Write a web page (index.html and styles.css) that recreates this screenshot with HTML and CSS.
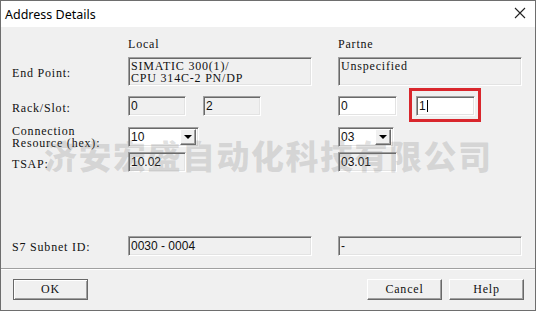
FILE: index.html
```html
<!DOCTYPE html>
<html>
<head>
<meta charset="utf-8">
<link rel="stylesheet" href="styles.css">
</head>
<body>
<div class="window">
  <div class="titlebar">
    <span class="title">Address Details</span>
    <svg class="close" width="12" height="12" viewBox="0 0 12 12"><path d="M1 1 L11 11 M11 1 L1 11" stroke="#222" stroke-width="1.1" fill="none"/></svg>
  </div>
  <div class="content">
    <div class="row r-head">
      <div class="label"></div>
      <div class="cell mono">Local</div>
      <div class="cell mono partner">Partne</div>
    </div>
    <div class="row r-end">
      <div class="label">End Point:</div>
      <div class="cell"><div class="box wide tall mono">SIMATIC 300(1)/<br>CPU 314C-2 PN/DP</div></div>
      <div class="cell partner"><div class="box wide tall mono">Unspecified</div></div>
    </div>
    <div class="row r-rack">
      <div class="label">Rack/Slot:</div>
      <div class="cell pair">
        <div class="box small">0</div>
        <div class="box small">2</div>
      </div>
      <div class="cell partner pair p-pair">
        <div class="box small edit">0</div>
        <div class="box small edit marked">1<span class="caret"></span></div>
      </div>
    </div>
    <div class="row r-conn">
      <div class="label twoline">Connection<br>Resource (hex):</div>
      <div class="cell"><div class="combo c-local"><span>10</span><span class="arrow"><i></i></span></div></div>
      <div class="cell partner"><div class="combo c-partner"><span>03</span><span class="arrow"><i></i></span></div></div>
    </div>
    <div class="row r-tsap">
      <div class="label">TSAP:</div>
      <div class="cell"><div class="box small">10.02</div></div>
      <div class="cell partner"><div class="box small p-tsap">03.01</div></div>
    </div>
    <div class="row r-subnet">
      <div class="label">S7 Subnet ID:</div>
      <div class="cell"><div class="box wide">0030 - 0004</div></div>
      <div class="cell partner"><div class="box wide">-</div></div>
    </div>
  </div>
  <div class="separator"></div>
  <div class="footer">
    <button class="btn default">OK</button>
    <div class="spacer"></div>
    <button class="btn">Cancel</button>
    <button class="btn">Help</button>
  </div>
  <div class="watermark">济安宏盛自动化科技有限公司</div>
</div>
</body>
</html>
```
FILE: styles.css
```css
* { box-sizing: border-box; }
html, body { margin: 0; padding: 0; background: #ffffff; }
.window {
  position: relative;
  width: 536px;
  height: 311px;
  border: 1px solid #6e6e6e;
  background: #f0f0f0;
  overflow: hidden;
}
.titlebar {
  height: 26px;
  background: #ffffff;
  display: flex;
  align-items: center;
  justify-content: space-between;
  padding: 0 9px 0 4px;
}
.title {
  font-family: "Noto Sans", "Open Sans", sans-serif;
  font-size: 12.5px;
  color: #000;
}
.close { display: block; margin-top: -3px; }
.content {
  padding-left: 11px;
  padding-top: 10px;
}
.row { display: flex; align-items: center; }
.label, .mono, .btn {
  font-family: "Liberation Serif", "Times New Roman", serif;
  font-size: 12px;
  letter-spacing: 0.8px;
  color: #111;
}
.label { width: 116px; flex: none; line-height: 12px; }
.cell { width: 184px; flex: none; }
.cell.partner { margin-left: 26px; }
.r-head { height: 13px; align-items: flex-end; line-height: 12px; }
.r-end { margin-top: 7px; height: 29px; }
.r-end .label { margin-top: 2px; }
.r-rack { margin-top: 10px; height: 20px; }
.r-rack .label { margin-top: 3px; }
.r-conn { margin-top: 11px; height: 20px; }
.r-tsap { margin-top: 5px; height: 20px; }
.r-tsap .label { margin-top: 3px; }
.r-subnet { margin-top: 64px; height: 20px; }
.r-subnet .label { margin-top: 2px; }
.twoline { line-height: 12px; }

.box {
  background: #f0f0f0;
  border-top: 1px solid #a0a0a0;
  border-left: 1px solid #a0a0a0;
  border-right: 1px solid #ffffff;
  border-bottom: 1px solid #ffffff;
  box-shadow: inset 1px 1px 0 #696969, inset -1px -1px 0 #e3e3e3;
  font-family: "Liberation Sans", Arial, sans-serif;
  font-size: 12px;
  line-height: 14px;
  color: #111;
  padding: 2px 0 0 2px;
  height: 20px;
  white-space: nowrap;
}
.box.mono {
  font-family: "Liberation Serif", "Times New Roman", serif;
  font-size: 12px;
  letter-spacing: 0.8px;
  line-height: 12px;
}
.box.wide { width: 184px; }
.box.tall { height: 29px; padding-top: 2px; }
.box.small { width: 58px; }
.box.edit { background: #ffffff; width: 59px; }
.box.p-tsap { width: 59px; }
.pair { display: flex; gap: 17px; }
.p-pair { gap: 19px; }
.marked { position: relative; }
.marked::after {
  content: "";
  position: absolute;
  left: -8px; top: -9px; right: -7px; bottom: -7px;
  border: 3px solid #d9262c;
}
.caret {
  display: inline-block;
  width: 1px;
  height: 12px;
  background: #000;
  vertical-align: -2px;
  margin-left: 1px;
}

.combo {
  position: relative;
  display: flex;
  justify-content: space-between;
  background: #ffffff;
  border-top: 1px solid #a0a0a0;
  border-left: 1px solid #a0a0a0;
  border-right: 1px solid #ffffff;
  border-bottom: 1px solid #ffffff;
  box-shadow: inset 1px 1px 0 #696969, inset -1px -1px 0 #e3e3e3;
  height: 20px;
  padding: 2px;
  font-family: "Liberation Sans", Arial, sans-serif;
  font-size: 12px;
  line-height: 14px;
  color: #111;
}
.c-local { width: 71px; }
.c-partner { width: 56px; }
.arrow {
  width: 16px;
  height: 16px;
  margin-top: -1px;
  background: #f0f0f0;
  border-top: 1px solid #ffffff;
  border-left: 1px solid #ffffff;
  border-right: 1px solid #696969;
  border-bottom: 1px solid #696969;
  box-shadow: inset -1px -1px 0 #a0a0a0;
  display: flex;
  align-items: center;
  justify-content: center;
}
.arrow i {
  display: block;
  width: 0; height: 0;
  border-left: 4px solid transparent;
  border-right: 4px solid transparent;
  border-top: 4px solid #000;
}

.separator {
  margin-top: 12px;
  height: 2px;
  border-top: 1px solid #a0a0a0;
  border-bottom: 1px solid #ffffff;
}
.footer {
  display: flex;
  align-items: center;
  padding: 9px 11px 0 12px;
  gap: 7px;
}
.spacer { flex: 1; }
.btn {
  width: 75px;
  height: 21px;
  margin: 0;
  padding: 0;
  background: #f0f0f0;
  border-top: 1px solid #ffffff;
  border-left: 1px solid #ffffff;
  border-right: 1px solid #696969;
  border-bottom: 1px solid #696969;
  box-shadow: inset -1px -1px 0 #a0a0a0;
}
.btn.default {
  border: 1px solid #696969;
  box-shadow: inset 1px 1px 0 #ffffff, inset -1px -1px 0 #a0a0a0;
}
.watermark {
  position: absolute;
  left: 43px;
  top: 134px;
  font-family: "Noto Sans CJK SC", sans-serif;
  font-weight: 900;
  font-size: 33px;
  letter-spacing: 1.5px;
  line-height: 40px;
  color: rgba(120, 120, 120, 0.22);
  white-space: nowrap;
  pointer-events: none;
}
```
